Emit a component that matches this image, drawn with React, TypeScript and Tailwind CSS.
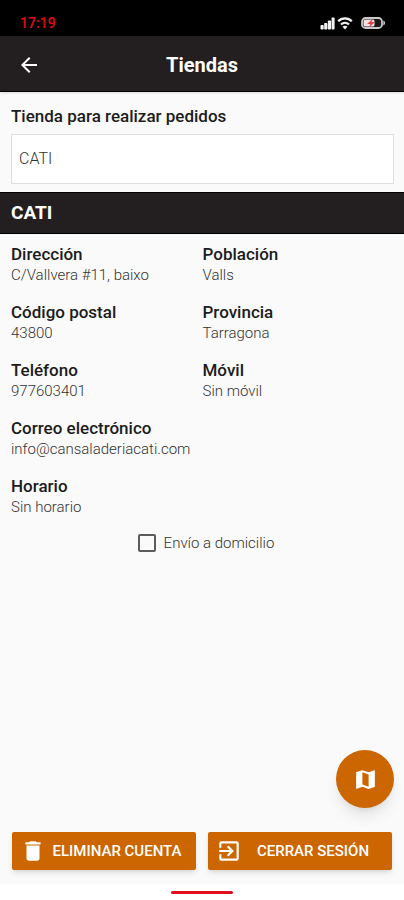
import React, { useState } from "react";
import { MdArrowBack, MdDelete, MdExitToApp, MdMap } from "react-icons/md";

interface Detail {
  label: string;
  value: string;
  wide?: boolean;
}

const details: Detail[] = [
  { label: "Dirección", value: "C/Vallvera #11, baixo" },
  { label: "Población", value: "Valls" },
  { label: "Código postal", value: "43800" },
  { label: "Provincia", value: "Tarragona" },
  { label: "Teléfono", value: "977603401" },
  { label: "Móvil", value: "Sin móvil" },
  { label: "Correo electrónico", value: "info@cansaladeriacati.com", wide: true },
  { label: "Horario", value: "Sin horario", wide: true },
];

function StatusIcons() {
  return (
    <svg width="66" height="14" viewBox="0 0 66 14" aria-hidden="true">
      {/* Signal */}
      <g fill="#f2f2f2">
        <rect x="0.5" y="9" width="3.2" height="4.5" rx="0.8" />
        <rect x="4.2" y="7" width="3.2" height="6.5" rx="0.8" />
        <rect x="7.9" y="4.5" width="3.2" height="9" rx="0.8" />
        <rect x="11.6" y="1.5" width="3" height="12" rx="0.8" />
      </g>
      {/* Wifi */}
      <g fill="none" stroke="#f2f2f2" strokeWidth="2.2">
        <path d="M18.2 5.2c3.8-3.8 9.8-3.8 13.6 0" />
        <path d="M21 8.5c2.3-2.2 5.7-2.2 8 0" />
      </g>
      <path d="M22.5 10.7c1.5-1.3 3.5-1.3 5 0L25 13.5z" fill="#f2f2f2" />
      {/* Battery */}
      <rect x="42" y="2" width="20" height="10" rx="3.5" fill="#1a1a1a" stroke="#c9c9c9" strokeWidth="1.8" />
      <path d="M63.3 4.5v5c2.4-1 2.4-4 0-5z" fill="#c9c9c9" />
      <rect x="43.5" y="3.5" width="11" height="7" rx="1.5" fill="#f4dede" />
      <path d="M53 2.8l-6 5.2h3.3l-1.3 3.2 6-5.2h-3.5z" fill="#e5404a" />
    </svg>
  );
}

export default function App() {
  const [store, setStore] = useState("CATI");
  const [delivery, setDelivery] = useState(false);

  return (
    <div className="flex min-h-screen flex-col bg-[#fafafa] font-['Roboto',sans-serif] text-[#1c1c1c]">
      {/* Status bar */}
      <div className="flex h-9 items-center justify-between bg-black pt-2.5 pr-[18px] pl-5">
        <span className="text-sm font-semibold text-[#dc0a14]">17:19</span>
        <StatusIcons />
      </div>

      {/* Header */}
      <header className="grid h-14 grid-cols-[42px_1fr_42px] items-center border-b border-black bg-[#231f20] px-2 pt-0.5 text-white shadow-sm">
        <button type="button" aria-label="Volver" className="flex justify-center">
          <MdArrowBack size={24} />
        </button>
        <h1 className="text-center text-xl font-bold">Tiendas</h1>
      </header>

      <main className="flex flex-1 flex-col">
        <div className="pt-3 pr-2.5 pb-2 pl-[11px]">
          <label htmlFor="store" className="block text-[17px] leading-6 font-medium">
            Tienda para realizar pedidos
          </label>
          <select
            id="store"
            value={store}
            onChange={(e) => setStore(e.target.value)}
            className="mt-1.5 block h-[50px] w-full appearance-none border border-[#dedede] bg-white px-[7px] text-base font-light text-[#333]"
          >
            <option value="CATI">CATI</option>
          </select>
        </div>

        <h2 className="border-y border-black bg-[#231f20] px-[11px] py-1.5 text-[19px] leading-7 font-bold text-white">
          {store}
        </h2>

        <dl className="grid grid-cols-2 gap-y-4 pt-2.5 pr-2.5 pl-[11px]">
          {details.map((item) => (
            <div key={item.label} className={item.wide ? "col-span-2" : ""}>
              <dt className="text-[17px] leading-[21px] font-medium">{item.label}</dt>
              <dd className="text-[15px] leading-[21px] font-light text-[#333]">{item.value}</dd>
            </div>
          ))}
        </dl>

        <label className="mt-3.5 flex items-center justify-center gap-2 pl-2 text-[15px] font-light text-[#333]">
          <input
            type="checkbox"
            checked={delivery}
            onChange={(e) => setDelivery(e.target.checked)}
            className="size-[18px] appearance-none rounded-xs border-2 border-[#5c5c5c] checked:bg-[#cc6600]"
          />
          Envío a domicilio
        </label>
      </main>

      <div className="flex justify-end px-2.5 pb-6">
        <button
          type="button"
          aria-label="Ver mapa"
          className="flex size-[58px] items-center justify-center rounded-full bg-[#cc6600] text-white shadow-lg"
        >
          <MdMap size={25} />
        </button>
      </div>

      {/* Account actions */}
      <div className="grid grid-cols-2 gap-3 px-3 pb-3.5">
        <button
          type="button"
          className="flex h-[38px] items-center rounded-xs bg-[#cc6600] px-2 text-[15px] font-medium text-white shadow-md"
        >
          <MdDelete size={26} />
          <span className="flex-1 text-center">ELIMINAR CUENTA</span>
        </button>
        <button
          type="button"
          className="flex h-[38px] items-center rounded-xs bg-[#cc6600] px-2 text-[15px] font-medium text-white shadow-md"
        >
          <MdExitToApp size={26} />
          <span className="flex-1 text-center">CERRAR SESIÓN</span>
        </button>
      </div>

      {/* Home indicator */}
      <div className="flex h-4 items-center justify-center bg-white">
        <div className="h-[3px] w-[62px] rounded-full bg-[#e01020]" />
      </div>
    </div>
  );
}
